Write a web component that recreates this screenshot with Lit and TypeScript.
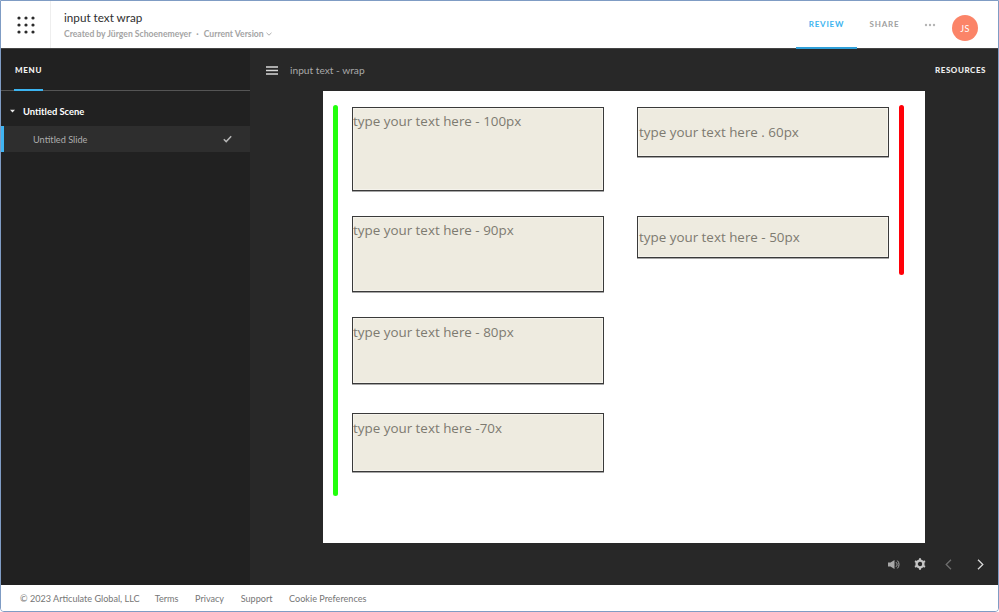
import { LitElement, html, css, svg } from "lit";
import { customElement } from "lit/decorators.js";

const boxes = [
  { l: 29, t: 16, w: 252, h: 84, text: "type your text here - 100px", cls: "top" },
  { l: 29, t: 125, w: 252, h: 76, text: "type your text here - 90px", cls: "top" },
  { l: 29, t: 226, w: 252, h: 67, text: "type your text here - 80px", cls: "top low" },
  { l: 29, t: 322, w: 252, h: 59, text: "type your text here -70x", cls: "top low" },
  { l: 314, t: 16, w: 252, h: 50, text: "type your text here . 60px", cls: "mid" },
  { l: 314, t: 125, w: 252, h: 42, text: "type your text here - 50px", cls: "mid" },
];

@customElement("app-root")
export class AppRoot extends LitElement {
  static styles = css`
    :host { display: block; width: 999px; height: 612px; font-family: Lato, sans-serif; }
    * { box-sizing: border-box; }
    .frame { width: 999px; height: 612px; border: 1px solid #7f9cc4; border-radius: 0 0 4px 4px; display: flex; flex-direction: column; overflow: hidden; background: #fff; }
    header { height: 48px; flex: none; display: flex; align-items: stretch; background: #fff; border-bottom: 1px solid #444; }
    .apps { width: 50px; flex: none; border-right: 1px solid #eee; display: flex; align-items: center; justify-content: center; }
    .apps svg { display: block; }
    .title { flex: 1; padding: 8px 0 0 13px; }
    .title h1 { margin: 0; font-size: 11.7px; font-weight: 400; line-height: 16px; color: #2f2f2f; }
    .sub { margin-top: 3px; font-size: 8.6px; line-height: 12px; font-weight: 700; color: #a4a4a4; display: flex; align-items: center; }
    .dot { margin: 0 5px; }
    .sub svg { margin-left: 2px; }
    .tabs { display: flex; align-items: stretch; }
    .tab { font-size: 8px; font-weight: 700; letter-spacing: 0.8px; display: flex; align-items: center; justify-content: center; padding-bottom: 1px; }
    .review { width: 61px; color: #3cb4f0; border-bottom: 2px solid #2f9fd8; height: 48px; margin-bottom: -1px; }
    .share { width: 55px; color: #a0a0a0; }
    .more { width: 35px; display: flex; align-items: center; justify-content: center; }
    .avatar { width: 26px; height: 26px; border-radius: 50%; background: #fb8468; color: #fff; font-size: 9px; display: flex; align-items: center; justify-content: center; margin: 14px 20px 0 5px; letter-spacing: 0.3px; }
    .body { flex: 1; display: flex; min-height: 0; }
    aside { width: 249px; flex: none; background: #212121; color: #fff; }
    .menuhead { height: 42px; border-bottom: 1px solid #555; padding-left: 13px; }
    .menutab { height: 42px; width: 29px; padding: 15px 0 0 1px; font-size: 8px; font-weight: 900; letter-spacing: 0.7px; border-bottom: 2px solid #3cb4f0; line-height: 12px; white-space: nowrap; color: #f2f2f2; }
    .scene { height: 35px; display: flex; align-items: center; font-size: 9.4px; font-weight: 700; padding: 5px 0 0 9px; color: #fff; }
    .scene svg { margin-right: 8px; }
    .slide { height: 26px; background: #2e2e2e; border-left: 3px solid #3fb4f2; display: flex; align-items: center; justify-content: space-between; padding: 0 18px 0 29px; font-size: 9.2px; color: #adadad; }
    main { flex: 1; background: #282828; display: flex; flex-direction: column; min-width: 0; }
    .bar { height: 42px; flex: none; display: flex; align-items: center; padding: 0 12px 0 16px; }
    .bar svg { margin-right: 12px; }
    .bar .name { flex: 1; font-size: 10.2px; color: #a8a8a8; }
    .bar .res { font-size: 8px; font-weight: 900; letter-spacing: 0.55px; color: #eee; }
    .stagewrap { padding-left: 73px; flex: none; }
    .stage { position: relative; width: 602px; height: 452px; background: #fff; }
    .box { position: absolute; background: #eeebe0; border: 1px solid #3a3a3a; font-family: "Open Sans", sans-serif; font-size: 13.4px; line-height: 19px; color: #7d7a70; padding: 0; white-space: nowrap; box-shadow: inset 0 0 0 1px #f5f3ec, 0 1px 0 rgba(0,0,0,.35); display: flex; }
    .box.top { padding-top: 4px; align-items: flex-start; }
    .box.low { padding-top: 5px; }
    .box.mid { align-items: center; padding-left: 1px; }
    .rail { position: absolute; width: 5px; border-radius: 3px; filter: blur(0.6px); }
    .green { left: 9.5px; top: 14px; height: 391px; background: #22ff0c; }
    .red { left: 575.5px; top: 14px; height: 170px; background: #ff0008; }
    .controls { flex: 1; display: flex; align-items: center; justify-content: flex-end; padding: 0 14px 0 0; }
    .controls svg { display: block; }
    .c1 { margin-right: 14px; }
    .c2 { margin-right: 19px; }
    .c3 { margin-right: 25px; }
    footer { height: 26px; flex: none; background: #fff; display: flex; align-items: center; padding-left: 19px; font-size: 9.1px; color: #767676; }
    footer span { margin-right: 16.6px; }
    footer span:first-child { margin-right: 15px; }
  `;

  render() {
    const dots = [0, 1, 2].flatMap((r) => [0, 1, 2].map((c) => svg`<circle cx=${2 + c * 7} cy=${2 + r * 7} r="1.6" fill="#2a2a2a"></circle>`));
    return html`<div class="frame">
      <header>
        <div class="apps"><svg width="18" height="18" viewBox="0 0 18 18">${dots}</svg></div>
        <div class="title">
          <h1>input text wrap</h1>
          <div class="sub">Created by Jürgen Schoenemeyer<span class="dot">·</span>Current Version
            <svg width="6" height="4" viewBox="0 0 6 4"><path d="M.5.8 3 3.2 5.5.8" fill="none" stroke="#a4a4a4" stroke-width=".9"></path></svg></div>
        </div>
        <div class="tabs">
          <div class="tab review">REVIEW</div>
          <div class="tab share">SHARE</div>
          <div class="more"><svg width="12" height="4" viewBox="0 0 12 4"><circle cx="2" cy="2" r="1.2" fill="#b5b5b5"></circle><circle cx="6" cy="2" r="1.2" fill="#b5b5b5"></circle><circle cx="10" cy="2" r="1.2" fill="#b5b5b5"></circle></svg></div>
          <div class="avatar">JS</div>
        </div>
      </header>
      <div class="body">
        <aside>
          <div class="menuhead"><div class="menutab">MENU</div></div>
          <div class="scene"><svg width="5" height="4" viewBox="0 0 5 4"><path d="M0 .8h5L2.5 3.6z" fill="#e8e8e8"></path></svg>Untitled Scene</div>
          <div class="slide"><span>Untitled Slide</span>
            <svg width="9" height="8" viewBox="0 0 9 8"><path d="M.8 4.2 3.2 6.6 8.2 1.2" fill="none" stroke="#b5b5b5" stroke-width="1.5"></path></svg></div>
        </aside>
        <main>
          <div class="bar">
            <svg width="12" height="9" viewBox="0 0 12 9"><path d="M0 1h12M0 4.5h12M0 8h12" stroke="#d8d8d8" stroke-width="1.3"></path></svg>
            <span class="name">input text - wrap</span>
            <span class="res">RESOURCES</span>
          </div>
          <div class="stagewrap"><div class="stage">
            <div class="rail green"></div>
            <div class="rail red"></div>
            ${boxes.map((b) => html`<div class="box ${b.cls}" style="left:${b.l}px;top:${b.t}px;width:${b.w}px;height:${b.h}px">${b.text}</div>`)}
          </div></div>
          <div class="controls">
            <svg class="c1" width="12" height="11" viewBox="0 0 12 11"><path d="M0 3.5h2.5L6.5 1v9L2.5 7.5H0z" fill="#a8a8a8"></path><path d="M8 3.2a3 3 0 0 1 0 4.6M9.4 1.6a5.5 5.5 0 0 1 0 7.8" fill="none" stroke="#a8a8a8" stroke-width="1"></path></svg>
            <svg class="c2" width="12" height="12" viewBox="0 0 12 12"><circle cx="6" cy="6" r="3.4" fill="none" stroke="#c4c4c4" stroke-width="2.4"></circle><path d="M6 .3v2M6 9.7v2M1 3.1l1.7 1M9.3 7.9l1.7 1M1 8.9l1.7-1M9.3 4.1l1.7-1" stroke="#c4c4c4" stroke-width="2"></path></svg>
            <svg class="c3" width="7" height="11" viewBox="0 0 7 11"><path d="M6 .8 1.2 5.5 6 10.2" fill="none" stroke="#6e6e6e" stroke-width="1.3"></path></svg>
            <svg width="7" height="11" viewBox="0 0 7 11"><path d="M1 .8 5.8 5.5 1 10.2" fill="none" stroke="#d8d8d8" stroke-width="1.3"></path></svg>
          </div>
        </main>
      </div>
      <footer>
        <span>© 2023 Articulate Global, LLC</span><span>Terms</span><span>Privacy</span><span>Support</span><span>Cookie Preferences</span>
      </footer>
    </div>`;
  }
}
